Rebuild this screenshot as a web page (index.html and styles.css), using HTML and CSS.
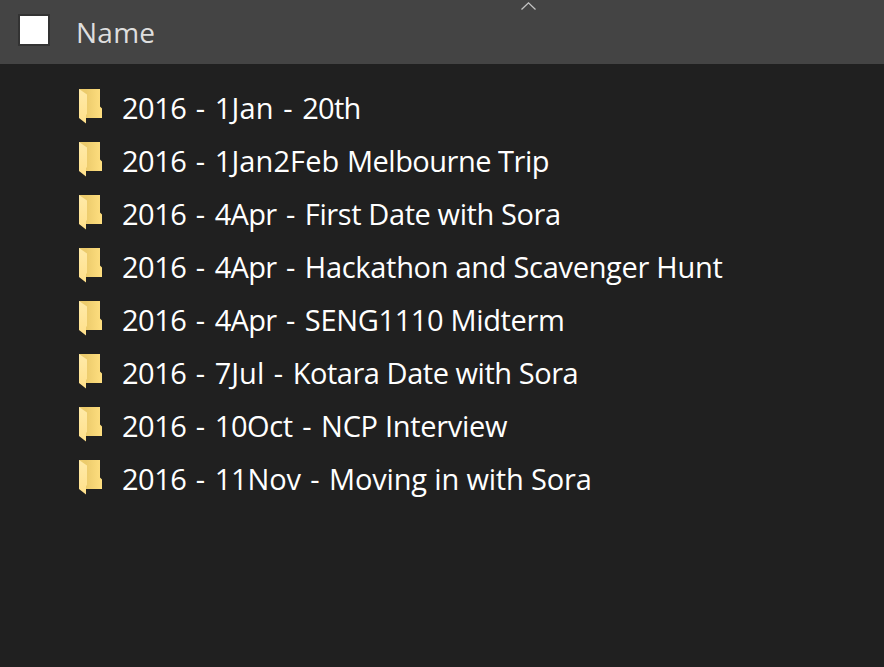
FILE: index.html
```html
<!DOCTYPE html>
<html lang="en">
<head>
<meta charset="utf-8">
<title>Folders</title>
<link rel="stylesheet" href="styles.css">
</head>
<body>
<svg class="defs" width="0" height="0" aria-hidden="true">
  <defs>
    <linearGradient id="back" x1="0" y1="0" x2="1" y2="0"><stop offset="0.3" stop-color="#eccb6c"/><stop offset="1" stop-color="#ffdf80"/></linearGradient>
    <linearGradient id="front" x1="0" y1="0" x2="0" y2="1"><stop offset="0" stop-color="#ffeaa8"/><stop offset="1" stop-color="#ffe08b"/></linearGradient>
    <symbol id="folder" viewBox="0 0 24 35"><path fill="url(#back)" d="M0 0h21v17.5l2 2V29H0z"/><path fill="url(#front)" d="M0 0l8 5.5V25l-1 1v8.5L0 29z"/></symbol>
  </defs>
</svg>
<header class="header">
  <span class="checkbox"></span>
  <span class="column">Name</span>
  <svg class="sort" width="18" height="10" viewBox="0 0 18 10"><path d="M1.5 8.5 8.5 1.8l7 6.7" fill="none" stroke="#c4c4c4" stroke-width="1.3"/></svg>
</header>
<ul class="files">
  <li class="row r1"><svg class="icon"><use href="#folder"/></svg><span class="name"><span class="year">2016</span><span class="sep"> - </span><span class="month">1Jan</span><span class="sep"> - </span><span class="title">20th</span></span></li>
  <li class="row r2"><svg class="icon"><use href="#folder"/></svg><span class="name"><span class="year">2016</span><span class="sep"> - </span><span class="month">1Jan2Feb</span> <span class="title">Melbourne Trip</span></span></li>
  <li class="row r3"><svg class="icon"><use href="#folder"/></svg><span class="name"><span class="year">2016</span><span class="sep"> - </span><span class="month">4Apr</span><span class="sep"> - </span><span class="title">First Date with Sora</span></span></li>
  <li class="row r4"><svg class="icon"><use href="#folder"/></svg><span class="name"><span class="year">2016</span><span class="sep"> - </span><span class="month">4Apr</span><span class="sep"> - </span><span class="title">Hackathon and Scavenger Hunt</span></span></li>
  <li class="row r5"><svg class="icon"><use href="#folder"/></svg><span class="name"><span class="year">2016</span><span class="sep"> - </span><span class="month">4Apr</span><span class="sep"> - </span><span class="title">SENG1110 Midterm</span></span></li>
  <li class="row r6"><svg class="icon"><use href="#folder"/></svg><span class="name"><span class="year">2016</span><span class="sep"> - </span><span class="month">7Jul</span><span class="sep"> - </span><span class="title">Kotara Date with Sora</span></span></li>
  <li class="row r7"><svg class="icon"><use href="#folder"/></svg><span class="name"><span class="year">2016</span><span class="sep"> - </span><span class="month">10Oct</span><span class="sep"> - </span><span class="title">NCP Interview</span></span></li>
  <li class="row r8"><svg class="icon"><use href="#folder"/></svg><span class="name"><span class="year">2016</span><span class="sep"> - </span><span class="month">11Nov</span><span class="sep"> - </span><span class="title">Moving in with Sora</span></span></li>
</ul>
</body>
</html>
```
FILE: styles.css
```css
* { box-sizing: border-box; }
body { margin: 0; min-height: 667px; background: #202020; color: #fff; font-family: "Open Sans", "Noto Sans", sans-serif; font-size: 29px; overflow: hidden; }
.defs { position: absolute; }
.header { position: relative; display: flex; height: 64px; background: #444; }
.checkbox { width: 32px; height: 32px; margin: 14px 0 0 18px; background: #fff; border: 2px solid #333; }
.column { margin: 12px 0 0 26px; line-height: 40px; font-size: 28px; letter-spacing: .25px; color: #dedede; }
.sort { position: absolute; left: 520px; top: 1px; }
.files { list-style: none; margin: 0; padding: 17px 0 0 79px; }
.row { display: flex; height: 53px; }
.icon { width: 24px; height: 35px; margin-top: 8px; flex: none; }
.name { margin-left: 19px; line-height: 54px; white-space: nowrap; }
.year { letter-spacing: -.5px; }
.sep { word-spacing: 2px; }
.r1 .month { letter-spacing: .2px; }
.r1 .title { letter-spacing: -.75px; }
.r2 .month { letter-spacing: .1px; }
.r2 .title { letter-spacing: -.5px; }
.r3 .month, .r4 .month, .r5 .month { letter-spacing: -.7px; }
.r3 .title { letter-spacing: -.4px; }
.r4 .title { letter-spacing: -.3px; }
.r5 .title { letter-spacing: -.35px; }
.r6 .title { letter-spacing: -.46px; }
.r7 .month { letter-spacing: -.4px; }
.r7 .title { letter-spacing: -.3px; }
.r8 .month { letter-spacing: -.2px; }
.r8 .title { letter-spacing: -.17px; }
```
